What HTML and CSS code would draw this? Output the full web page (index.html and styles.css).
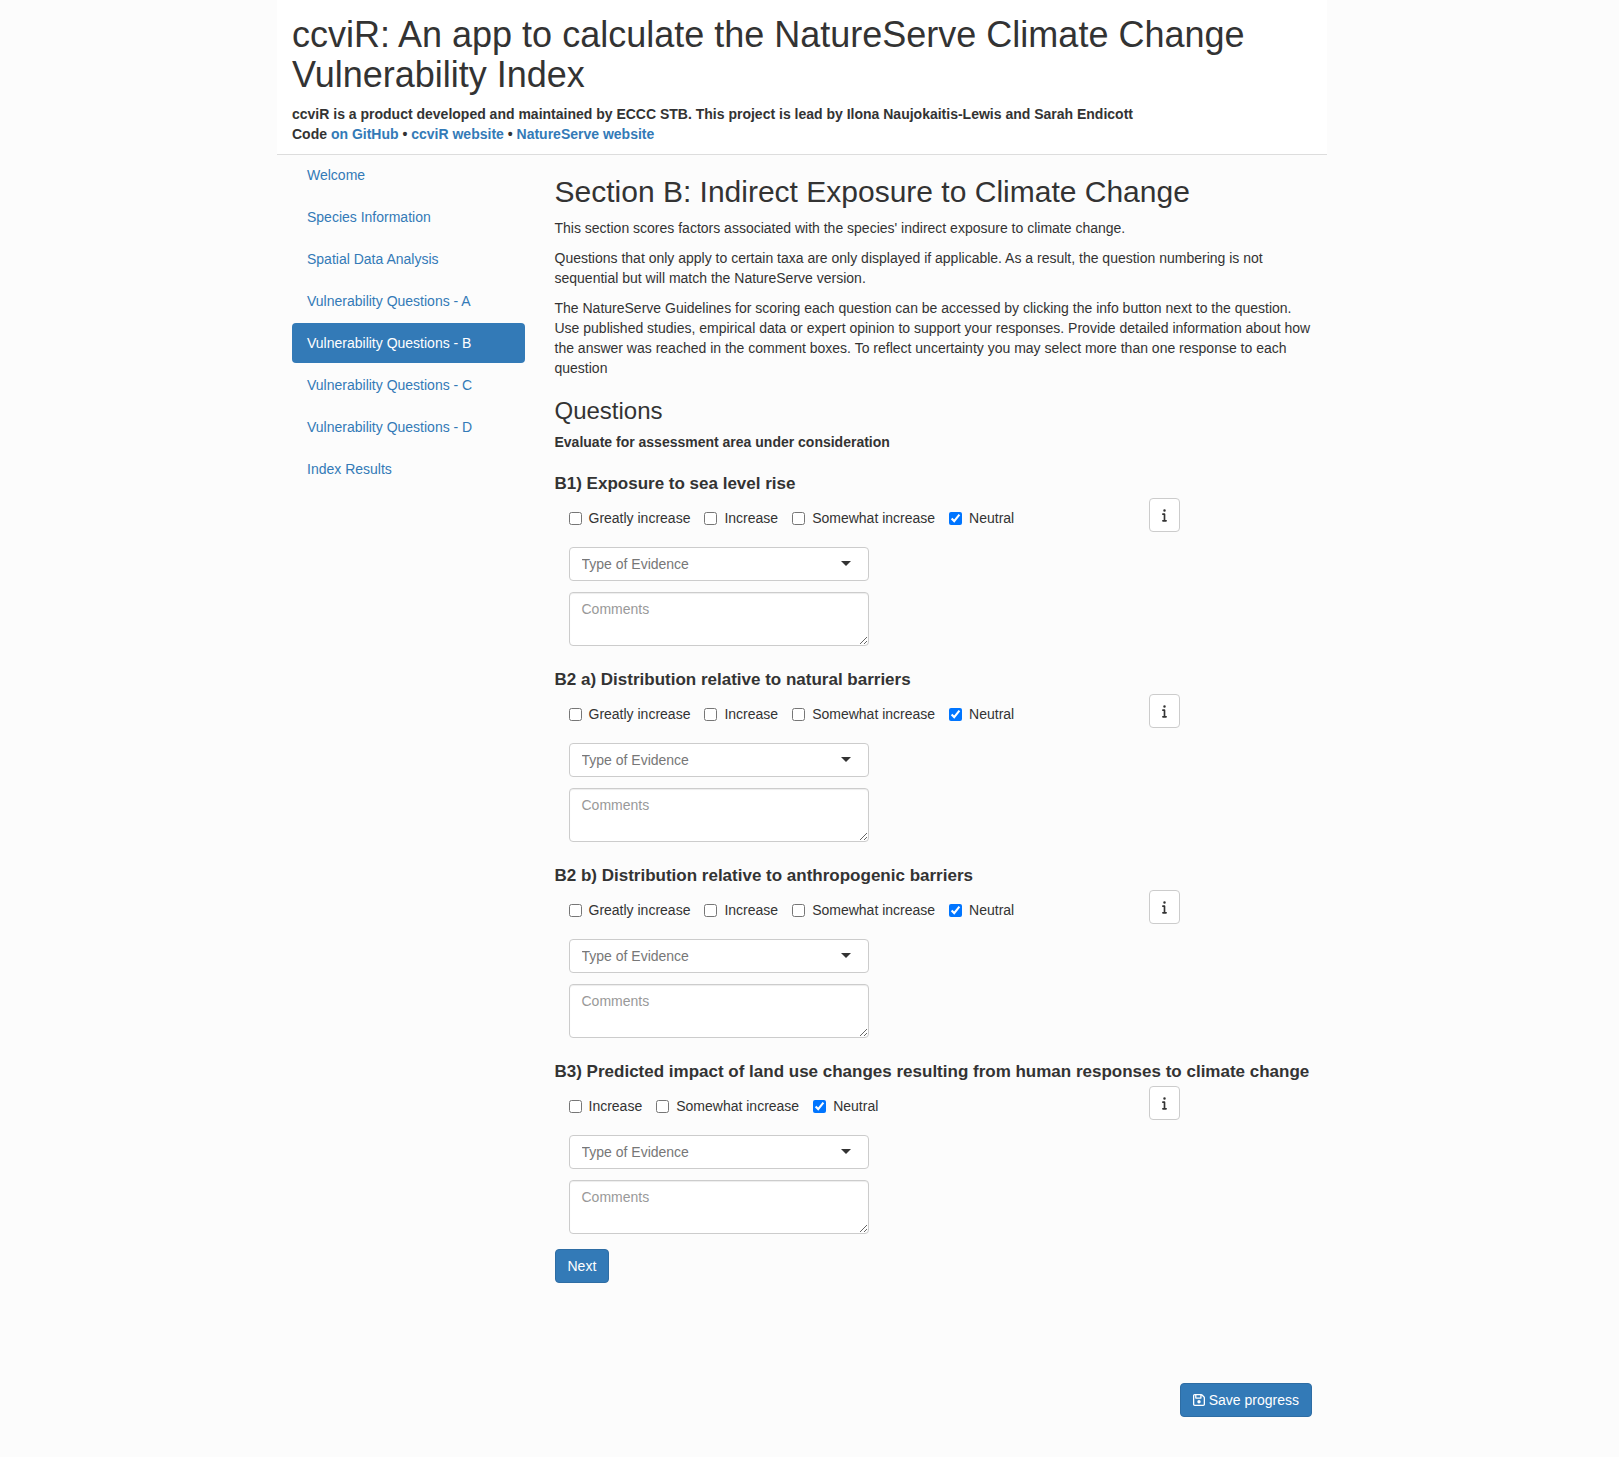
FILE: index.html
```html
<!DOCTYPE html>
<html lang="en">
<head>
<meta charset="utf-8">
<meta name="viewport" content="width=device-width, initial-scale=1">
<title>ccviR</title>
<link rel="stylesheet" href="styles.css">
</head>
<body>
<svg class="sprite" aria-hidden="true">
  <symbol id="icon-info" viewBox="0 0 192 512"><path d="M48 80a48 48 0 1 1 96 0A48 48 0 1 1 48 80zM0 224c0-17.700 14.300-32 32-32H96c17.700 0 32 14.300 32 32V448h32c17.700 0 32 14.300 32 32s-14.300 32-32 32H32c-17.700 0-32-14.300-32-32s14.300-32 32-32H64V256H32c-17.700 0-32-14.300-32-32z"/></symbol>
</svg>
<div class="container">
  <header class="page-header">
    <h1>ccviR: An app to calculate the NatureServe Climate Change Vulnerability Index</h1>
    <p>ccviR is a product developed and maintained by ECCC STB. This project is lead by Ilona Naujokaitis-Lewis and Sarah Endicott<br>
    Code <a href="#github">on GitHub</a> • <a href="#ccvir">ccviR website</a> • <a href="#natureserve">NatureServe website</a></p>
  </header>
  <div class="layout">
    <nav class="sidebar">
      <a href="#welcome">Welcome</a>
      <a href="#species">Species Information</a>
      <a href="#spatial">Spatial Data Analysis</a>
      <a href="#a">Vulnerability Questions - A</a>
      <a href="#b" class="active" aria-current="page">Vulnerability Questions - B</a>
      <a href="#c">Vulnerability Questions - C</a>
      <a href="#d">Vulnerability Questions - D</a>
      <a href="#results">Index Results</a>
    </nav>
    <main class="content">
      <h2>Section B: Indirect Exposure to Climate Change</h2>
      <p>This section scores factors associated with the species' indirect exposure to climate change.</p>
      <p>Questions that only apply to certain taxa are only displayed if applicable. As a result, the question numbering is not sequential but will match the NatureServe version.</p>
      <p>The NatureServe Guidelines for scoring each question can be accessed by clicking the info button next to the question. Use published studies, empirical data or expert opinion to support your responses. Provide detailed information about how the answer was reached in the comment boxes. To reflect uncertainty you may select more than one response to each question</p>
      <h3>Questions</h3>
      <p class="lead">Evaluate for assessment area under consideration</p>

      <form>
        <section class="question">
          <h4>B1) Exposure to sea level rise</h4>
          <div class="answer">
            <div class="options">
              <label><input type="checkbox">Greatly increase</label>
              <label><input type="checkbox">Increase</label>
              <label><input type="checkbox">Somewhat increase</label>
              <label><input type="checkbox" checked>Neutral</label>
            </div>
            <button type="button" class="btn btn-default" aria-label="Guidelines for B1"><svg class="icon-info"><use href="#icon-info"/></svg></button>
          </div>
          <div class="fields">
            <div class="select"><select aria-label="Type of evidence for B1"><option>Type of Evidence</option></select></div>
            <textarea placeholder="Comments" aria-label="Comments for B1"></textarea>
          </div>
        </section>

        <section class="question">
          <h4>B2 a) Distribution relative to natural barriers</h4>
          <div class="answer">
            <div class="options">
              <label><input type="checkbox">Greatly increase</label>
              <label><input type="checkbox">Increase</label>
              <label><input type="checkbox">Somewhat increase</label>
              <label><input type="checkbox" checked>Neutral</label>
            </div>
            <button type="button" class="btn btn-default" aria-label="Guidelines for B2 a"><svg class="icon-info"><use href="#icon-info"/></svg></button>
          </div>
          <div class="fields">
            <div class="select"><select aria-label="Type of evidence for B2 a"><option>Type of Evidence</option></select></div>
            <textarea placeholder="Comments" aria-label="Comments for B2 a"></textarea>
          </div>
        </section>

        <section class="question">
          <h4>B2 b) Distribution relative to anthropogenic barriers</h4>
          <div class="answer">
            <div class="options">
              <label><input type="checkbox">Greatly increase</label>
              <label><input type="checkbox">Increase</label>
              <label><input type="checkbox">Somewhat increase</label>
              <label><input type="checkbox" checked>Neutral</label>
            </div>
            <button type="button" class="btn btn-default" aria-label="Guidelines for B2 b"><svg class="icon-info"><use href="#icon-info"/></svg></button>
          </div>
          <div class="fields">
            <div class="select"><select aria-label="Type of evidence for B2 b"><option>Type of Evidence</option></select></div>
            <textarea placeholder="Comments" aria-label="Comments for B2 b"></textarea>
          </div>
        </section>

        <section class="question">
          <h4>B3) Predicted impact of land use changes resulting from human responses to climate change</h4>
          <div class="answer">
            <div class="options">
              <label><input type="checkbox">Increase</label>
              <label><input type="checkbox">Somewhat increase</label>
              <label><input type="checkbox" checked>Neutral</label>
            </div>
            <button type="button" class="btn btn-default" aria-label="Guidelines for B3"><svg class="icon-info"><use href="#icon-info"/></svg></button>
          </div>
          <div class="fields">
            <div class="select"><select aria-label="Type of evidence for B3"><option>Type of Evidence</option></select></div>
            <textarea placeholder="Comments" aria-label="Comments for B3"></textarea>
          </div>
        </section>

        <button type="button" class="btn btn-primary">Next</button>
      </form>
      <div class="save">
        <button type="button" class="btn btn-primary"><svg class="icon-save" viewBox="0 32 448 448" aria-hidden="true"><path d="M48 96V416c0 8.800 7.200 16 16 16H384c8.800 0 16-7.200 16-16V170.500c0-4.200-1.700-8.300-4.700-11.300l33.900-33.900c12 12 18.700 28.300 18.700 45.300V416c0 35.300-28.700 64-64 64H64c-35.300 0-64-28.700-64-64V96C0 60.700 28.700 32 64 32H309.500c17 0 33.300 6.700 45.300 18.700l74.500 74.500-33.900 33.900L320.800 84.700c-.3-.3-.5-.5-.8-.8V184c0 13.300-10.700 24-24 24H104c-13.300 0-24-10.700-24-24V80H64c-8.800 0-16 7.200-16 16zm80-16v80H272V80H128zm32 240a64 64 0 1 1 128 0 64 64 0 1 1 -128 0z"/></svg>Save progress</button>
      </div>
    </main>
  </div>
</div>
</body>
</html>
```
FILE: styles.css
```css
* {
  box-sizing: border-box;
}

body {
  margin: 0;
  padding-right: 15px;
  background: #fcfcfc;
  color: #333;
  font: 14px/20px "Liberation Sans", Arial, sans-serif;
}

a {
  color: #337ab7;
  text-decoration: none;
}

h1, h2, h3, h4, p {
  margin: 0;
}

h1, h2, h3 {
  font-weight: 400;
}

.sprite {
  display: none;
}

.container {
  max-width: 1050px;
  margin: 0 auto;
}

.page-header {
  padding: 15px 15px 10px;
  background: #fff;
  border-bottom: 1px solid #ddd;
  font-weight: 700;
}

.page-header h1 {
  margin-bottom: 9px;
  font-size: 36px;
  line-height: 40px;
}

.layout {
  display: grid;
  grid-template-columns: 1fr 3fr;
}

.sidebar {
  display: flex;
  flex-direction: column;
  gap: 2px;
  padding: 0 15px;
}

.sidebar a {
  padding: 10px 15px;
  border-radius: 4px;
}

.sidebar .active {
  background: #337ab7;
  color: #fff;
}

.content {
  padding: 20px 15px 40px;
}

.content h2 {
  margin-bottom: 10px;
  font-size: 30px;
  line-height: 33px;
}

.content p {
  margin-bottom: 10px;
}

.content h3 {
  margin: 20px 0 8px;
  font-size: 24px;
  line-height: 26px;
}

.content .lead {
  margin-bottom: 22px;
  font-weight: 700;
}

.question {
  margin-bottom: 24px;
}

.question:last-of-type {
  margin-bottom: 15px;
}

.question h4 {
  margin-bottom: 4px;
  font-size: 17px;
  line-height: 20px;
}

.answer {
  display: grid;
  grid-template-columns: 25fr 7fr;
  justify-items: start;
  margin-bottom: 15px;
  padding-left: 14px;
}

.options {
  display: flex;
  flex-wrap: wrap;
  gap: 14px;
  padding-top: 10px;
}

.options label {
  display: flex;
  gap: 7px;
}

.options input {
  width: 13px;
  height: 13px;
  margin: 4px 0 0;
}

.fields {
  display: flex;
  flex-direction: column;
  gap: 11px;
  max-width: 314px;
  padding-left: 14px;
}

.select {
  position: relative;
}

.select::after {
  content: "";
  position: absolute;
  top: 14px;
  right: 18px;
  border: 5px solid transparent;
  border-top-color: #333;
  border-bottom: 0;
  pointer-events: none;
}

select,
textarea {
  display: block;
  width: 100%;
  margin: 0;
  padding: 6px 12px;
  border: 1px solid #ccc;
  border-radius: 4px;
  background: #fff;
  font: inherit;
}

select {
  height: 34px;
  appearance: none;
  color: #777;
}

textarea {
  height: 54px;
  box-shadow: inset 0 1px 1px rgba(0, 0, 0, 0.075);
  color: #555;
}

textarea::placeholder {
  color: #999;
}

.btn {
  display: inline-flex;
  align-items: center;
  gap: 4px;
  height: 34px;
  padding: 0 12px;
  border: 1px solid;
  border-radius: 4px;
  font: inherit;
}

.btn-default {
  border-color: #ccc;
  background: #fff;
  color: #333;
}

.btn-primary {
  border-color: #2e6da4;
  background: #337ab7;
  color: #fff;
}

.btn svg {
  fill: currentColor;
}

.icon-info {
  width: 5px;
  height: 14px;
}

.icon-save {
  width: 12px;
  height: 12px;
}

.save {
  display: flex;
  justify-content: flex-end;
  margin-top: 100px;
}
```
